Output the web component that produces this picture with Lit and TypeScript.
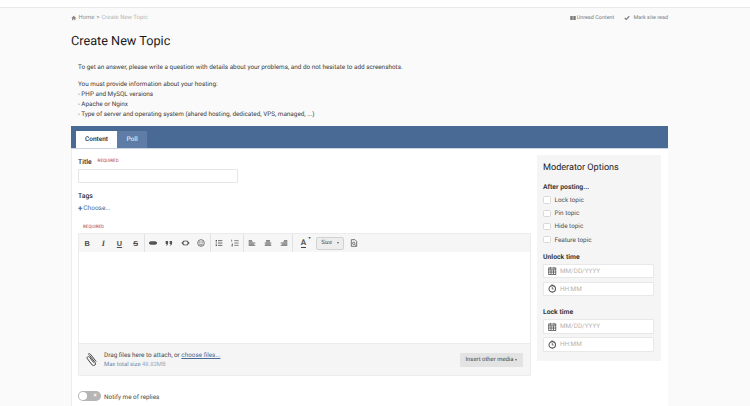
import { LitElement, html, css, svg } from "lit";
import { customElement } from "lit/decorators.js";

const ico = (w: number, h: number, body: unknown, vb = "0 0 12 12") =>
  html`<svg width=${w} height=${h} viewBox=${vb} fill="none" stroke="currentColor" stroke-width="1.2" class="ic">${body}</svg>`;

const calendar = ico(8.5, 9, svg`<rect x="1" y="2.5" width="10" height="9" fill="none"/><path d="M1 5h10M3.5 1v2.5M8.5 1v2.5M4.3 5v6M7.7 5v6M1 8.2h10"/>`);
const clock = ico(8.5, 9, svg`<circle cx="6" cy="6.5" r="4.6" stroke-width="1.5"/><path d="M6 4v2.7h2"/><path d="M4.5 1h3" stroke-width="1"/>`);

const tools = [
  [html`<b class="gl">B</b>`, html`<i class="gl serif">I</i>`, html`<u class="gl">U</u>`, html`<s class="gl">S</s>`],
  [
    ico(8, 8, svg`<rect x="0.5" y="4" width="11" height="4" rx="2" fill="currentColor"/>`),
    ico(8, 8, svg`<path d="M1 3h3.6v3.4C4.6 8.5 3.6 9.6 2 10l-.4-1.1c.7-.3 1.1-.8 1.2-1.5H1zM7 3h3.6v3.4c0 2.1-1 3.2-2.6 3.6l-.4-1.1c.7-.3 1.1-.8 1.2-1.5H7z" fill="currentColor" stroke="none"/>`),
    ico(9, 8, svg`<path d="M4 3L1 6l3 3M8 3l3 3-3 3" stroke-width="1.7"/><path d="M4 3h4M4 9h4"/>`),
    ico(8, 8, svg`<circle cx="6" cy="6" r="5"/><path d="M4.3 3.5v3M7.7 3.5v3M3.5 7.8c1.4 1.4 3.6 1.4 5 0"/>`),
  ],
  [
    ico(8, 8, svg`<path d="M1 2.5h2M1 9.5h2" stroke-width="2.2"/><path d="M4.5 2.5H11M4.5 6H11M4.5 9.5H11M1 6h2" stroke-width="1.3"/>`),
    ico(8, 8, svg`<path d="M1 1v3M1 7.5h1.8L1 10.5h2M5 2.5h6.5M5 6h6.5M5 9.5h6.5" stroke-width="1.1"/>`),
  ],
  [
    ico(8, 8, svg`<path d="M1 2.5h5M1 6h10M1 9.5h10M1 4.3h6M1 7.8h8" stroke-width="1.2"/>`),
    ico(8, 8, svg`<path d="M3 2.5h6M1 6h10M1 9.5h10M3 4.3h6M2 7.8h8" stroke-width="1.2"/>`),
    ico(8, 8, svg`<path d="M6 2.5h5M1 6h10M1 9.5h10M5 4.3h6M3 7.8h8" stroke-width="1.2"/>`),
  ],
];

@customElement("app-root")
export class AppRoot extends LitElement {
  static styles = css`
    :host { display: block; height: 406px; overflow: hidden; background: #fafafa; font-family: Roboto, "Liberation Sans", sans-serif; color: #353c41; text-rendering: geometricPrecision; }
    * { box-sizing: border-box; }
    .ic { display: block; flex: none; }
    .top { height: 8px; background: #fff; border-bottom: 1px solid #e8e8e8; }
    .wrap { width: 597px; margin-left: 71px; }
    .crumbs { display: flex; justify-content: space-between; align-items: center; height: 19px; font-size: 5.92px; color: #8a8a8a; }
    .crumbs .l, .crumbs .r { display: flex; align-items: center; }
    .crumbs .l { gap: 2px; }
    .crumbs .cur { color: #b5b5b5; }
    .crumbs .r { gap: 10px; color: #7d7d7d; font-size: 5.46px; }
    .crumbs .r span { display: flex; align-items: center; gap: 1px; }
    .crumbs .r .chk { gap: 3px; }
    h1 { margin: 7px 0 0; font-size: 12.7px; line-height: 16px; font-weight: 400; color: #1c1c1c; }
    .intro { margin-top: 11.7px; padding-left: 7px; font-size: 6.37px; line-height: 10px; color: #3c3c3c; }
    .intro p { margin: 0 0 7.6px; }
    .intro p:last-child { margin-bottom: 0; }
    .card { margin-top: 6.7px; background: #fff; height: 300px; border-left: 1px solid #ededed; }
    .bar { height: 22px; background: #4a6a96; padding: 5px 0 0 4px; display: flex; margin-left: -1px; box-shadow: 0 1px 0 #c9d3e2; }
    .tab { height: 17px; display: flex; align-items: center; justify-content: center; font-size: 6.5px; font-weight: 500; }
    .tab.on { width: 41px; margin-left: 1px; background: #fff; color: #1f2a33; }
    .tab.off { width: 30px; background: #5f7ca6; color: #dfe6f0; }
    .body { display: grid; grid-template-columns: 453px 124px; column-gap: 6px; padding: 9px 7px 0 6px; }
    .label { font-size: 6.83px; line-height: 10px; font-weight: 500; color: #2b2b2b; display: flex; align-items: center; gap: 6px; }
    .req { font-size: 4.55px; font-weight: 400; color: #b23b3b; text-transform: uppercase; }
    .title-input { width: 160px; height: 14.5px; margin-top: 2px; border: 1px solid #e6e6e6; border-radius: 1px; background: #fff; }
    .tags { margin-top: 8px; }
    .choose { display: flex; align-items: center; gap: 1px; margin-top: 2px; font-size: 6.5px; line-height: 11px; color: #4a6a96; }
    .plus { font-weight: 700; font-size: 8px; line-height: 8px; }
    .req2 { display: block; margin: 10px 0 0 5px; line-height: 8px; }
    .editor { margin-top: 1px; border: 1px solid #ececec; border-radius: 1px; }
    .tb { height: 18px; background: #f6f6f6; display: flex; align-items: stretch; color: #555; }
    .grp { display: flex; align-items: center; border-right: 1px solid #e2e2e2; }
    .t { width: 16.2px; display: flex; align-items: center; justify-content: center; height: 18px; }
    .gl { font-size: 7.3px; font-weight: 700; color: #4d4d4d; text-decoration-thickness: 1px; font-family: "Liberation Sans", sans-serif; }
    .gl.serif { font-family: "Liberation Serif", serif; font-size: 8.2px; }
    .color { width: 20px; position: relative; display: flex; align-items: center; justify-content: center; font-size: 8px; font-weight: 700; }
    .color .a { border-bottom: 1px solid #444; line-height: 8px; }
    .color .up { position: absolute; top: 1px; right: 3px; font-size: 4px; }
    .size { align-self: center; margin-left: 2.7px; width: 27.5px; height: 13px; border: 1px solid #d2d2d2; border-radius: 2px; background: #ededed; font-size: 5.92px; display: flex; align-items: center; justify-content: space-between; padding: 0 4px; color: #555; }
    .caret { width: 0; height: 0; border-left: 1.5px solid transparent; border-right: 1.5px solid transparent; border-top: 2px solid #666; }
    .src { width: 20px; display: flex; align-items: center; justify-content: center; }
    .area { height: 91px; background: #fff; }
    .att { height: 32px; background: #f5f5f5; border-top: 1px solid #ececec; display: flex; align-items: center; padding: 0 7px 0 6px; color: #444; }
    .clip { margin: 0 6px 0 1px; color: #3a3a3a; }
    .att .t1 { font-size: 6.37px; line-height: 10px; color: #4a4a4a; }
    .att .t1 a { color: #4a6a96; text-decoration: underline; }
    .att .t2 { font-size: 5.92px; line-height: 10px; color: #6d85a8; }
    .att .t2 span { color: #9aa9bf; }
    .att .txt { flex: 1; }
    .ins { width: 63.5px; height: 14px; background: #e3e3e3; border-radius: 1px; font-size: 5.92px; color: #444; display: flex; align-items: center; justify-content: center; gap: 1.5px; }
    .toggle-row { display: flex; align-items: center; gap: 3px; margin-top: 15px; font-size: 6.37px; color: #4a4a4a; }
    .toggle-row .lbl { padding-top: 1px; }
    .toggle { width: 23px; height: 10px; border-radius: 5px; background: #b5b5b5; padding: 1px; display: flex; align-items: center; justify-content: space-between; }
    .knob { width: 8px; height: 8px; border-radius: 50%; background: #fff; }
    .x { color: #fff; font-size: 6px; font-weight: 700; width: 10px; text-align: center; line-height: 8px; }
    .side { background: #f5f5f5; height: 205.7px; margin-top: -2px; padding: 7px 7px 0 6px; }
    h2 { margin: 0; font-size: 9.1px; line-height: 13px; font-weight: 400; color: #1f1f1f; }
    h3 { margin: 0; font-size: 6.83px; line-height: 10px; font-weight: 700; color: #3a3a3a; }
    .after { margin-top: 7px; }
    .chk-row { display: flex; align-items: center; gap: 4px; height: 13.2px; font-size: 6.37px; color: #4f4f4f; }
    .after + .chk-row { margin-top: 1.5px; }
    .box { width: 7.5px; height: 7.5px; background: #fff; border: 1px solid #d9d9d9; border-radius: 1.5px; }
    .sec1 { margin-top: 6px; }
    .sec2 { margin-top: 11px; }
    .dt { height: 14.5px; margin-top: 3.5px; background: #fff; border: 1px solid #e8e8e8; border-radius: 1px; display: flex; align-items: center; gap: 3.5px; padding-left: 4px; font-size: 6.37px; color: #b2b2b2; }
    .dt .ic { color: #555; }
    .sec1 h3 + .dt { margin-top: 1.5px; }
    .sec2 h3 + .dt { margin-top: 2px; }
  `;

  render() {
    const field = (icon: unknown, text: string) => html`<div class="dt">${icon}<span>${text}</span></div>`;
    return html`
      <div class="top"></div>
      <div class="wrap">
        <div class="crumbs">
          <div class="l">
            ${ico(5.5, 6, svg`<path d="M6 1L0.5 6.2h1.8V11h2.6V8h2.2v3h2.6V6.2h1.8z" fill="currentColor" stroke="none"/>`)}
            <span>Home</span><span>&gt;</span><span class="cur">Create New Topic</span>
          </div>
          <div class="r">
            <span>${ico(6, 6, svg`<rect x="0.5" y="2" width="11" height="8" fill="currentColor" stroke="none"/><path d="M6 2v8" stroke="#fff" stroke-width="1"/>`)}Unread Content</span>
            <span class="chk">${ico(6, 6, svg`<path d="M1.5 6L4.5 9L10.5 2.5" stroke-width="2.4"/>`)}Mark site read</span>
          </div>
        </div>
        <h1>Create New Topic</h1>
        <div class="intro">
          <p>To get an answer, please write a question with details about your problems, and do not hesitate to add screenshots.</p>
          <p>You must provide information about your hosting:<br />- PHP and MySQL versions<br />- Apache or Nginx<br />- Type of server and operating system (shared hosting, dedicated, VPS, managed, ...)</p>
        </div>
        <div class="card">
          <div class="bar"><div class="tab on">Content</div><div class="tab off">Poll</div></div>
          <div class="body">
            <div>
              <div class="label">Title <span class="req">Required</span></div>
              <div class="title-input"></div>
              <div class="label tags">Tags</div>
              <div class="choose"><span class="plus">+</span>Choose...</div>
              <span class="req req2">Required</span>
              <div class="editor">
                <div class="tb">
                  ${tools.map((g) => html`<div class="grp">${g.map((t) => html`<div class="t">${t}</div>`)}</div>`)}
                  <div class="color"><span class="a">A</span><span class="up">▾</span></div>
                  <div class="size">Size<span class="caret"></span></div>
                  <div class="src">${ico(8, 8, svg`<path d="M2 1h5.5L10 3.5V11H2z"/><circle cx="5.6" cy="6.5" r="1.8"/><path d="M7 8l2 2.2"/>`)}</div>
                </div>
                <div class="area"></div>
                <div class="att">
                  <div class="clip">${ico(12, 13, svg`<path d="M4 2.5l6.6 8.6a2.2 2.2 0 0 1-3.5 2.7L1.6 6.6a1.5 1.5 0 0 1 2.4-1.9l5 6.5" stroke-width="1.1"/><path d="M2.3 1.6a2 2 0 0 1 3-.1l6.6 8.4" stroke-width="1.1"/>`, "0 0 14 15")}</div>
                  <div class="txt">
                    <div class="t1">Drag files here to attach, or <a>choose files...</a></div>
                    <div class="t2">Max total size <span>48.83MB</span></div>
                  </div>
                  <div class="ins">Insert other media <span class="caret"></span></div>
                </div>
              </div>
              <div class="toggle-row"><div class="toggle"><div class="knob"></div><div class="x">×</div></div><span class="lbl">Notify me of replies</span></div>
            </div>
            <div class="side">
              <h2>Moderator Options</h2>
              <h3 class="after">After posting...</h3>
              ${["Lock topic", "Pin topic", "Hide topic", "Feature topic"].map((t) => html`<div class="chk-row"><span class="box"></span>${t}</div>`)}
              <div class="sec1">
                <h3>Unlock time</h3>
                ${field(calendar, "MM/DD/YYYY")}${field(clock, "HH:MM")}
              </div>
              <div class="sec2">
                <h3>Lock time</h3>
                ${field(calendar, "MM/DD/YYYY")}${field(clock, "HH:MM")}
              </div>
            </div>
          </div>
        </div>
      </div>
    `;
  }
}
